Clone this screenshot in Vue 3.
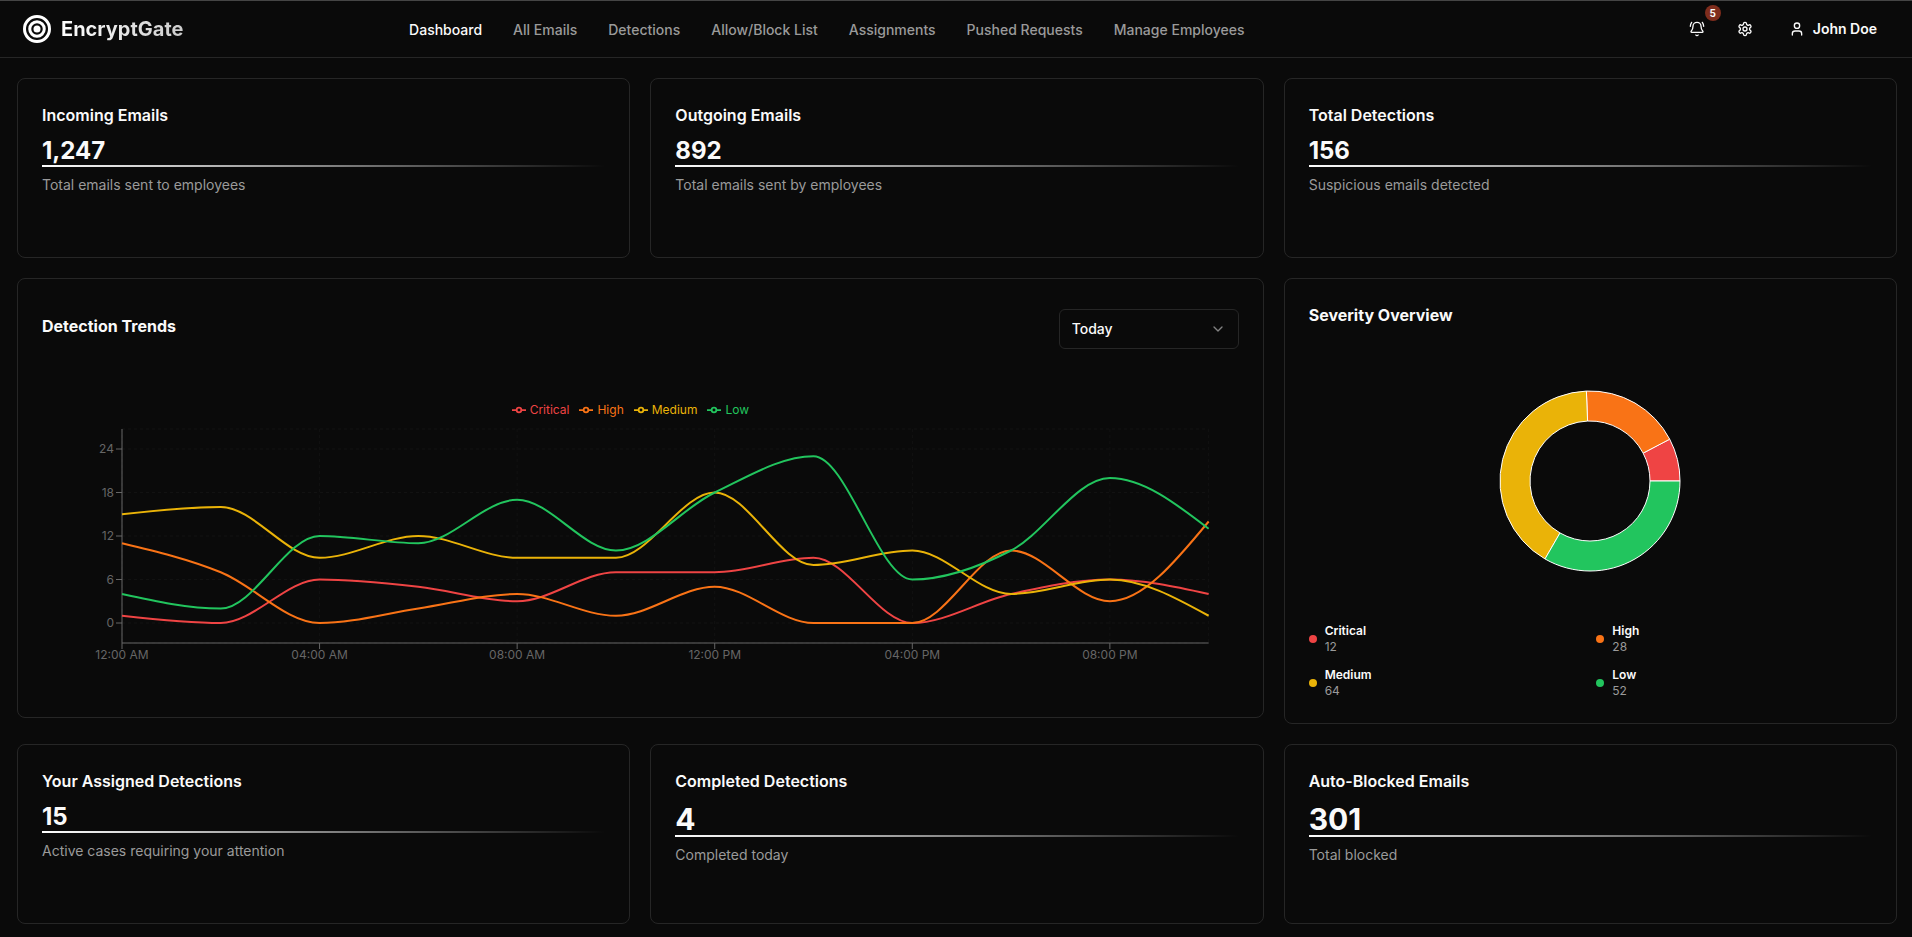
<script setup>
import { computed, onBeforeUnmount, onMounted, ref } from 'vue'

const navItems = ['Dashboard', 'All Emails', 'Detections', 'Allow/Block List', 'Assignments', 'Pushed Requests', 'Manage Employees']

const topStats = [
  { title: 'Incoming Emails', value: '1,247', note: 'Total emails sent to employees' },
  { title: 'Outgoing Emails', value: '892', note: 'Total emails sent by employees' },
  { title: 'Total Detections', value: '156', note: 'Suspicious emails detected' },
]
const bottomStats = [
  { title: 'Your Assigned Detections', value: '15', note: 'Active cases requiring your attention' },
  { title: 'Completed Detections', value: '4', note: 'Completed today', large: true },
  { title: 'Auto-Blocked Emails', value: '301', note: 'Total blocked', large: true },
]

const series = [
  { name: 'Critical', color: '#ef4444', total: 12, values: [1, 0, 6, 5, 3, 7, 7, 9, 0, 4, 6, 4] },
  { name: 'High', color: '#f97316', total: 28, values: [11, 7, 0, 2, 4, 1, 5, 0, 0, 10, 3, 14] },
  { name: 'Medium', color: '#eab308', total: 64, values: [15, 16, 9, 12, 9, 9, 18, 8, 10, 4, 6, 1] },
  { name: 'Low', color: '#22c55e', total: 52, values: [4, 2, 12, 11, 17, 10, 18, 23, 6, 10, 20, 13] },
]
const timeLabels = ['12:00 AM', '04:00 AM', '08:00 AM', '12:00 PM', '04:00 PM', '08:00 PM']

const range = ref('today')

// The trend chart is drawn in real pixels, so its width follows the card.
const chartBox = ref(null)
const chartWidth = ref(1196)
let observer
onMounted(() => {
  const measure = () => { chartWidth.value = chartBox.value.getBoundingClientRect().width }
  measure()
  observer = new ResizeObserver(measure)
  observer.observe(chartBox.value)
})
onBeforeUnmount(() => observer && observer.disconnect())

const plot = { left: 80, top: 10, bottom: 224, pad: 20 }
const plotRight = computed(() => chartWidth.value - 30)
const xAt = (i) => plot.left + ((plotRight.value - plot.left) * i) / 11
const yAt = (v) => plot.bottom - plot.pad - (v * (plot.bottom - plot.top - 2 * plot.pad)) / 24

const yTicks = [0, 6, 12, 18, 24]
const xTicks = computed(() => timeLabels.map((label, i) => ({ label, x: xAt(i * 2) })))
const gridX = computed(() => [...xTicks.value.map((t) => t.x), plotRight.value])
const gridY = [plot.top, ...yTicks.map(yAt), plot.bottom]

// Monotone cubic interpolation through evenly spaced points.
function smoothPath(values) {
  const pts = values.map((v, i) => [xAt(i), yAt(v)])
  const n = pts.length
  const h = pts[1][0] - pts[0][0]
  const s = pts.slice(1).map((p, i) => (p[1] - pts[i][1]) / h)
  const m = new Array(n)
  for (let i = 1; i < n - 1; i++) {
    const a = s[i - 1]
    const b = s[i]
    m[i] = (Math.sign(a) + Math.sign(b)) * Math.min(Math.abs(a), Math.abs(b), Math.abs(a + b) / 4)
  }
  m[0] = (3 * s[0] - m[1]) / 2
  m[n - 1] = (3 * s[n - 2] - m[n - 2]) / 2
  let d = `M${pts[0][0]},${pts[0][1]}`
  for (let i = 1; i < n; i++) {
    const [x0, y0] = pts[i - 1]
    const [x1, y1] = pts[i]
    d += `C${x0 + h / 3},${y0 + (m[i - 1] * h) / 3},${x1 - h / 3},${y1 - (m[i] * h) / 3},${x1},${y1}`
  }
  return d
}
const lines = computed(() => series.map((s) => ({ name: s.name, color: s.color, d: smoothPath(s.values) })))

// Ring sectors run counter-clockwise from three o'clock.
const total = series.reduce((sum, s) => sum + s.total, 0)
let angle = 0
const sectors = series.map((s) => {
  const start = angle
  angle += (s.total / total) * Math.PI * 2
  const at = (r, a) => `${100 + r * Math.cos(a)},${100 - r * Math.sin(a)}`
  return {
    name: s.name,
    color: s.color,
    d: `M${at(90, start)}A90,90,0,0,0,${at(90, angle)}L${at(60, angle)}A60,60,0,0,1,${at(60, start)}Z`,
  }
})
</script>

<template>
  <div class="page">
    <header class="topbar">
      <a class="brand" href="#">
        <svg class="brand-mark" viewBox="0 0 28 28" aria-hidden="true">
          <circle cx="14" cy="14" r="12.5" />
          <circle cx="14" cy="14" r="7.25" />
          <circle class="core" cx="14" cy="14" r="3.5" />
        </svg>
        <span class="brand-name">EncryptGate</span>
      </a>
      <nav class="nav" aria-label="Main">
        <a v-for="(item, i) in navItems" :key="item" href="#" :class="{ active: i === 0 }">{{ item }}</a>
      </nav>
      <div class="actions">
        <button class="icon-button" type="button" aria-label="Notifications">
          <svg class="icon" viewBox="0 0 24 24" aria-hidden="true">
            <path d="M10.268 21a2 2 0 0 0 3.464 0" />
            <path d="M22 8c0-2.3-.8-4.3-2-6" />
            <path d="M3.262 15.326A1 1 0 0 0 4 17h16a1 1 0 0 0 .74-1.673C19.41 13.956 18 12.499 18 8A6 6 0 0 0 6 8c0 4.499-1.411 5.956-2.738 7.326" />
            <path d="M4 2C2.8 3.7 2 5.7 2 8" />
          </svg>
          <span class="badge">5</span>
        </button>
        <button class="icon-button" type="button" aria-label="Settings">
          <svg class="icon" viewBox="0 0 24 24" aria-hidden="true">
            <path d="M12.22 2h-.44a2 2 0 0 0-2 2v.18a2 2 0 0 1-1 1.73l-.43.25a2 2 0 0 1-2 0l-.15-.08a2 2 0 0 0-2.73.73l-.22.38a2 2 0 0 0 .73 2.73l.15.1a2 2 0 0 1 1 1.72v.51a2 2 0 0 1-1 1.74l-.15.09a2 2 0 0 0-.73 2.73l.22.38a2 2 0 0 0 2.73.73l.15-.08a2 2 0 0 1 2 0l.43.25a2 2 0 0 1 1 1.73V20a2 2 0 0 0 2 2h.44a2 2 0 0 0 2-2v-.18a2 2 0 0 1 1-1.73l.43-.25a2 2 0 0 1 2 0l.15.08a2 2 0 0 0 2.73-.73l.22-.39a2 2 0 0 0-.73-2.73l-.15-.08a2 2 0 0 1-1-1.74v-.5a2 2 0 0 1 1-1.74l.15-.09a2 2 0 0 0 .73-2.73l-.22-.38a2 2 0 0 0-2.73-.73l-.15.08a2 2 0 0 1-2 0l-.43-.25a2 2 0 0 1-1-1.73V4a2 2 0 0 0-2-2z" />
            <circle cx="12" cy="12" r="3" />
          </svg>
        </button>
        <button class="user-button" type="button">
          <svg class="icon" viewBox="0 0 24 24" aria-hidden="true">
            <path d="M19 21v-2a4 4 0 0 0-4-4H9a4 4 0 0 0-4 4v2" />
            <circle cx="12" cy="7" r="4" />
          </svg>
          John Doe
        </button>
      </div>
    </header>

    <main class="grid">
      <section v-for="s in topStats" :key="s.title" class="card stat">
        <h2 class="title">{{ s.title }}</h2>
        <p class="value">{{ s.value }}</p>
        <p class="note">{{ s.note }}</p>
      </section>

      <section class="card trends">
        <div class="trends-head">
          <h2 class="title">Detection Trends</h2>
          <div class="select-wrap">
            <select v-model="range" class="select" aria-label="Time range">
              <option value="today">Today</option>
              <option value="week">This Week</option>
              <option value="month">This Month</option>
            </select>
            <svg class="chevron" viewBox="0 0 24 24" aria-hidden="true"><path d="m6 9 6 6 6-6" /></svg>
          </div>
        </div>
        <ul class="legend">
          <li v-for="s in series" :key="s.name" :style="{ color: s.color }">
            <svg class="legend-mark" viewBox="0 0 32 32" aria-hidden="true">
              <path d="M0,16h10.667A5.333,5.333,0,1,1,21.333,16H32M21.333,16A5.333,5.333,0,1,1,10.667,16" />
            </svg>
            {{ s.name }}
          </li>
        </ul>
        <div ref="chartBox" class="chart">
          <svg :width="chartWidth" height="274" role="img" aria-label="Detections by severity over time">
            <g class="gridlines">
              <line v-for="(y, i) in gridY" :key="'h' + i" :x1="plot.left" :x2="plotRight" :y1="y" :y2="y" />
              <line v-for="(x, i) in gridX" :key="'v' + i" :x1="x" :x2="x" :y1="plot.top" :y2="plot.bottom" />
            </g>
            <g class="axis">
              <line :x1="plot.left" :x2="plotRight" :y1="plot.bottom" :y2="plot.bottom" />
              <line :x1="plot.left" :x2="plot.left" :y1="plot.top" :y2="plot.bottom" />
              <line v-for="t in xTicks" :key="t.label" :x1="t.x" :x2="t.x" :y1="plot.bottom" :y2="plot.bottom + 6" />
              <line v-for="v in yTicks" :key="v" :x1="plot.left - 6" :x2="plot.left" :y1="yAt(v)" :y2="yAt(v)" />
            </g>
            <g class="tick-labels">
              <text v-for="t in xTicks" :key="t.label" :x="t.x" :y="plot.bottom + 16" text-anchor="middle">{{ t.label }}</text>
              <text v-for="v in yTicks" :key="v" :x="plot.left - 8" :y="yAt(v)" dy="0.355em" text-anchor="end">{{ v }}</text>
            </g>
            <path v-for="l in lines" :key="l.name" class="line" :d="l.d" :stroke="l.color" />
          </svg>
        </div>
      </section>

      <section class="card severity">
        <h2 class="title">Severity Overview</h2>
        <div class="donut">
          <svg width="200" height="200" viewBox="0 0 200 200" role="img" aria-label="Detections by severity">
            <path v-for="s in sectors" :key="s.name" :d="s.d" :fill="s.color" stroke="#fff" />
          </svg>
        </div>
        <ul class="totals">
          <li v-for="s in series" :key="s.name">
            <span class="dot" :style="{ background: s.color }"></span>
            <span class="total">
              <span class="total-name">{{ s.name }}</span>
              <span class="total-count">{{ s.total }}</span>
            </span>
          </li>
        </ul>
      </section>

      <section v-for="s in bottomStats" :key="s.title" class="card stat">
        <h2 class="title">{{ s.title }}</h2>
        <p class="value" :class="{ large: s.large }">{{ s.value }}</p>
        <p class="note">{{ s.note }}</p>
      </section>
    </main>
  </div>
</template>

<style>
html,
body {
  background: #0a0a0a;
}
</style>

<style scoped>
.page {
  box-sizing: border-box;
  min-height: 100vh;
  border-top: 1px solid #454545;
  background: #0a0a0a;
  color: #fafafa;
  font-family: Inter, 'Liberation Sans', sans-serif;
  font-size: 14px;
  line-height: 20px;
}
.page *,
.page *::after {
  box-sizing: border-box;
}
h2,
p,
ul {
  margin: 0;
  padding: 0;
}
ul {
  list-style: none;
}
svg {
  display: block;
}
a {
  color: inherit;
  text-decoration: none;
}
button,
select {
  font: inherit;
  color: inherit;
}

.topbar {
  display: flex;
  align-items: center;
  height: 57px;
  padding: 0 19px 0 23px;
  border-bottom: 1px solid #262626;
}
.brand {
  display: flex;
  align-items: center;
  gap: 10px;
}
.brand-mark {
  width: 28px;
  height: 28px;
  fill: none;
  stroke: #fff;
  stroke-width: 3;
}
.brand-mark .core {
  fill: #fff;
  stroke: none;
}
.brand-name {
  font-size: 20px;
  line-height: 28px;
  font-weight: 700;
  background: linear-gradient(90deg, #fff, #ccc);
  background-clip: text;
  -webkit-background-clip: text;
  color: transparent;
}
.nav {
  display: flex;
  gap: 31px;
  margin-left: 11.8vw;
  padding-top: 2px;
  font-weight: 500;
  color: #9a9a9a;
  white-space: nowrap;
}
.nav .active {
  color: #fafafa;
}
.actions {
  display: flex;
  align-items: center;
  gap: 8px;
  margin-left: auto;
}
.icon-button,
.user-button {
  display: flex;
  align-items: center;
  justify-content: center;
  height: 40px;
  padding: 0;
  border: 0;
  border-radius: 6px;
  background: transparent;
}
.icon-button {
  position: relative;
  width: 40px;
}
.user-button {
  gap: 8px;
  padding: 0 16px;
  font-weight: 600;
}
.icon,
.chevron {
  width: 16px;
  height: 16px;
  fill: none;
  stroke: currentColor;
  stroke-width: 2;
  stroke-linecap: round;
  stroke-linejoin: round;
}
.badge {
  position: absolute;
  top: -4px;
  right: -4px;
  width: 16px;
  height: 16px;
  border-radius: 8px;
  background: #7f2d1d;
  font-size: 10px;
  line-height: 16px;
  font-weight: 700;
  text-align: center;
}

.grid {
  display: grid;
  grid-template-columns: repeat(3, minmax(0, 1fr));
  align-items: start;
  gap: 20px;
  padding: 20px 15px 13px 17px;
}
.card {
  padding: 24px;
  border: 1px solid #262626;
  border-radius: 8px;
}
.title {
  font-size: 16px;
  line-height: 24px;
  font-weight: 600;
}
.stat {
  min-height: 180px;
}
.value {
  position: relative;
  margin-top: 8px;
  font-size: 24px;
  line-height: 32px;
  font-weight: 700;
}
.value.large {
  font-size: 30px;
  line-height: 36px;
}
.value::after {
  content: '';
  position: absolute;
  left: 0;
  right: 0;
  bottom: 0;
  height: 2px;
  background: linear-gradient(90deg, #fff, transparent);
}
.note {
  margin-top: 8px;
  color: #9a9a9a;
}

.trends {
  grid-column: span 2;
}
.trends-head {
  display: flex;
  align-items: center;
  justify-content: space-between;
  padding-top: 6px;
}
.trends-head .title {
  padding-bottom: 6px;
}
.trends .title,
.severity .title {
  font-weight: 700;
}
.select-wrap {
  position: relative;
  width: 180px;
}
.select {
  width: 100%;
  height: 40px;
  padding: 0 12px;
  border: 1px solid #262626;
  border-radius: 6px;
  background: #0a0a0a;
  font-weight: 500;
  appearance: none;
}
.chevron {
  position: absolute;
  top: 12px;
  right: 13px;
  color: #828282;
  pointer-events: none;
}
.legend {
  display: flex;
  justify-content: center;
  margin-top: 52px;
  padding: 0 30px 0 20px;
  font-size: 12px;
  line-height: 18px;
}
.legend li {
  display: flex;
  align-items: center;
  gap: 4px;
  margin-right: 10px;
}
.legend-mark {
  width: 14px;
  height: 14px;
  fill: none;
  stroke: currentColor;
  stroke-width: 4;
}
.chart {
  overflow: hidden;
}
.gridlines line {
  stroke: #121212;
  stroke-dasharray: 3 3;
}
.axis line {
  stroke: #666;
}
.tick-labels {
  fill: #666;
  font-size: 12px;
}
.line {
  fill: none;
  stroke-width: 2;
}

.donut {
  display: flex;
  align-items: center;
  justify-content: center;
  height: 260px;
  margin: 24px 0 12px;
}
.totals {
  display: grid;
  grid-template-columns: 1fr 1fr;
  gap: 12px;
  font-size: 12px;
  line-height: 16px;
}
.totals li {
  display: flex;
  align-items: center;
  gap: 8px;
}
.dot {
  width: 8px;
  height: 8px;
  border-radius: 50%;
}
.total {
  display: flex;
  flex-direction: column;
}
.total-name {
  font-weight: 600;
}
.total-count {
  color: #9a9a9a;
}
</style>
